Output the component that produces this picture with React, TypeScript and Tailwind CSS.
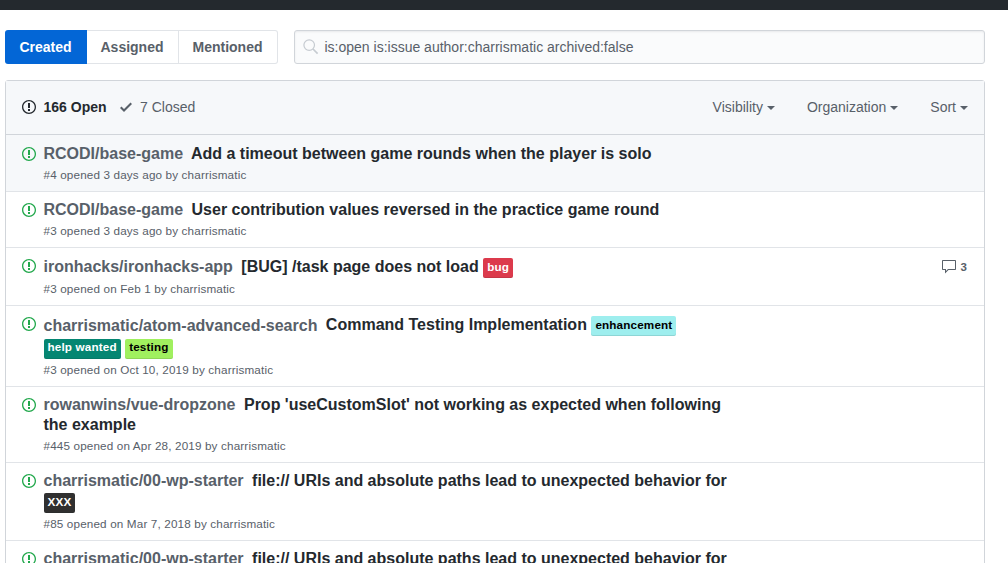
import React from "react";

type Label = { text: string; cls: string };
type Issue = {
  repo: string;
  title: string;
  labels?: Label[];
  meta: string;
  row: string;
  pad: string;
  iconGap: string;
  metaGap: string;
  comments?: number;
  repoShift?: string;
};

const issues: Issue[] = [
  { repo: "RCODI/base-game", title: "Add a timeout between game rounds when the player is solo", meta: "#4 opened 3 days ago by charrismatic", row: "h-[57px] bg-[#f6f8fa]", pad: "pt-[9px]", iconGap: "mt-[11px]", metaGap: "mt-[3px]" },
  { repo: "RCODI/base-game", title: "User contribution values reversed in the practice game round", meta: "#3 opened 3 days ago by charrismatic", row: "h-14", pad: "pt-2", iconGap: "mt-2.5", metaGap: "mt-[3px]" },
  { repo: "ironhacks/ironhacks-app", title: "[BUG] /task page does not load", labels: [{ text: "bug", cls: "bg-[#dc3a4c] leading-[18px] text-white" }], meta: "#3 opened on Feb 1 by charrismatic", row: "h-[58px]", pad: "pt-[9px]", iconGap: "mt-2.5", metaGap: "mt-[3px]", comments: 3 },
  { repo: "charrismatic/atom-advanced-search", title: "Command Testing Implementation", labels: [{ text: "enhancement", cls: "bg-[#9eeeee] leading-[18px] text-black" }, { text: "help wanted", cls: "mt-[3px] bg-[#058672] leading-4 text-white" }, { text: "testing", cls: "mt-[3px] bg-[#a0f05f] leading-4 text-black" }], meta: "#3 opened on Oct 10, 2019 by charrismatic", row: "h-[81px]", pad: "pt-[9px]", iconGap: "mt-2.5", metaGap: "mt-[3px]", repoShift: "relative top-px" },
  { repo: "rowanwins/vue-dropzone", title: "Prop 'useCustomSlot' not working as expected when following the example", meta: "#445 opened on Apr 28, 2019 by charrismatic", row: "h-[76px]", pad: "pt-2", iconGap: "mt-2.5", metaGap: "mt-[3px]" },
  { repo: "charrismatic/00-wp-starter", title: "file:// URIs and absolute paths lead to unexpected behavior for", labels: [{ text: "XXX", cls: "mt-0.5 bg-[#303030] leading-[18px] text-white" }], meta: "#85 opened on Mar 7, 2018 by charrismatic", row: "h-[78px]", pad: "pt-2", iconGap: "mt-2.5", metaGap: "mt-[3px]" },
  { repo: "charrismatic/00-wp-starter", title: "file:// URIs and absolute paths lead to unexpected behavior for", meta: "#84 opened on Mar 7, 2018 by charrismatic", row: "h-[78px]", pad: "pt-2", iconGap: "mt-2.5", metaGap: "mt-1" },
];

function IssueOpened({ className }: { className: string }) {
  return (
    <svg width="14" height="16" viewBox="0 0 14 16" fill="currentColor" className={className}>
      <path fillRule="evenodd" d="M7 2.3c3.14 0 5.7 2.56 5.7 5.7s-2.56 5.7-5.7 5.7A5.71 5.71 0 0 1 1.3 8c0-3.14 2.56-5.7 5.7-5.7zM7 1C3.14 1 0 4.14 0 8s3.14 7 7 7 7-3.14 7-7-3.14-7-7-7zm1 3H6v5h2V4zm0 6H6v2h2v-2z" />
    </svg>
  );
}

function Filter({ children }: { children: string }) {
  return (
    <span className="flex items-center">
      {children}
      <span className="ml-1 mt-0.5 border-x-4 border-t-4 border-x-transparent border-t-current" />
    </span>
  );
}

function IssueRow({ issue }: { issue: Issue }) {
  return (
    <li className={`flex shrink-0 border-b border-[#e1e4e8] ${issue.row}`}>
      <IssueOpened className={`ml-4 shrink-0 text-[#22a84c] ${issue.iconGap}`} />
      <div className={`ml-[7.5px] w-[695px] ${issue.pad}`}>
        <h3 className="text-base leading-5 font-bold">
          <span className={`text-[#586069] ${issue.repoShift ?? ""}`}>{issue.repo}</span>
          <span className="ml-1">{" "}{issue.title}</span>
          {issue.labels?.map((l) => (
            <React.Fragment key={l.text}>
              {" "}
              <span className={`inline-block h-5 rounded-[2px] px-1 align-[1px] text-[11.7px] tracking-[0.15px] shadow-[inset_0_-1px_0_rgba(27,31,35,0.12)] ${l.cls}`}>{l.text}</span>
            </React.Fragment>
          ))}
        </h3>
        <p className={`text-[11.7px] leading-4 tracking-[0.15px] text-[#586069] ${issue.metaGap}`}>{issue.meta}</p>
      </div>
      {issue.comments && (
        <div className="ml-auto mr-4 mt-[11px] flex h-4 items-center text-[#586069]">
          <svg width="16" height="16" viewBox="0 0 16 16" fill="currentColor">
            <path fillRule="evenodd" d="M14 1H2c-.55 0-1 .45-1 1v8c0 .55.45 1 1 1h2v3.5L7.5 11H14c.55 0 1-.45 1-1V2c0-.55-.45-1-1-1zm0 9H7l-2 2v-2H2V2h12v8z" />
          </svg>
          <span className="ml-[3.5px] w-[7.5px] text-[11.5px] font-bold">{issue.comments}</span>
        </div>
      )}
    </li>
  );
}

export default function App() {
  return (
    <div className="flex h-[563px] w-[1008px] flex-col overflow-hidden bg-white font-['Liberation_Sans',Arial,sans-serif] text-sm text-[#24292e]">
      <header className="h-[10px] shrink-0 bg-[#24292e]" />
      <div className="mt-5 ml-[5px] flex h-[34px] w-[980px] shrink-0">
        <nav className="flex w-[273px] font-bold text-[#586069]">
          <a className="flex w-[82px] items-center justify-center rounded-l-[3px] bg-[#0366d6] pr-px text-white">Created</a>
          <a className="flex w-[92px] items-center justify-center border-y border-r border-[#e1e4e8] pr-px">Assigned</a>
          <a className="flex grow items-center justify-center rounded-r-[3px] border-y border-r border-[#e1e4e8] pr-px">Mentioned</a>
        </nav>
        <div className="ml-4 flex grow items-center rounded-[3px] border border-[#d1d5da] bg-[#fafbfc] pl-2 text-[#586069] shadow-[inset_0_1px_2px_rgba(27,31,35,0.075)]">
          <svg width="16" height="16" viewBox="0 0 16 16" fill="none" stroke="#c6cbd1" className="mr-[5.5px]">
            <circle cx="6.2" cy="6.1" r="5.3" strokeWidth="1.2" />
            <path d="M10 10l4.6 4.6" strokeWidth="1.7" />
          </svg>
          is:open is:issue author:charrismatic archived:false
        </div>
      </div>
      <main className="mt-4 ml-[5px] flex w-[980px] shrink-0 flex-col rounded-t-[3px] border border-[#d1d5da]">
        <div className="flex h-[54px] shrink-0 items-center border-b border-[#d1d5da] bg-[#f6f8fa] px-4 pb-0.5 text-[#586069]">
          <IssueOpened className="mr-[7.5px] text-[#24292e]" />
          <span className="font-bold text-[#24292e]">166 Open</span>
          <svg width="12" height="16" viewBox="0 0 12 16" fill="currentColor" className="mr-2 ml-[13.5px]">
            <path fillRule="evenodd" d="M12 5l-8 8-4-4 1.5-1.5L4 10l6.5-6.5L12 5z" />
          </svg>
          <span>7 Closed</span>
          <div className="ml-auto flex gap-8">
            <Filter>Visibility</Filter>
            <Filter>Organization</Filter>
            <Filter>Sort</Filter>
          </div>
        </div>
        <ul className="flex flex-col">
          {issues.map((issue, i) => (
            <IssueRow key={i} issue={issue} />
          ))}
        </ul>
      </main>
    </div>
  );
}
